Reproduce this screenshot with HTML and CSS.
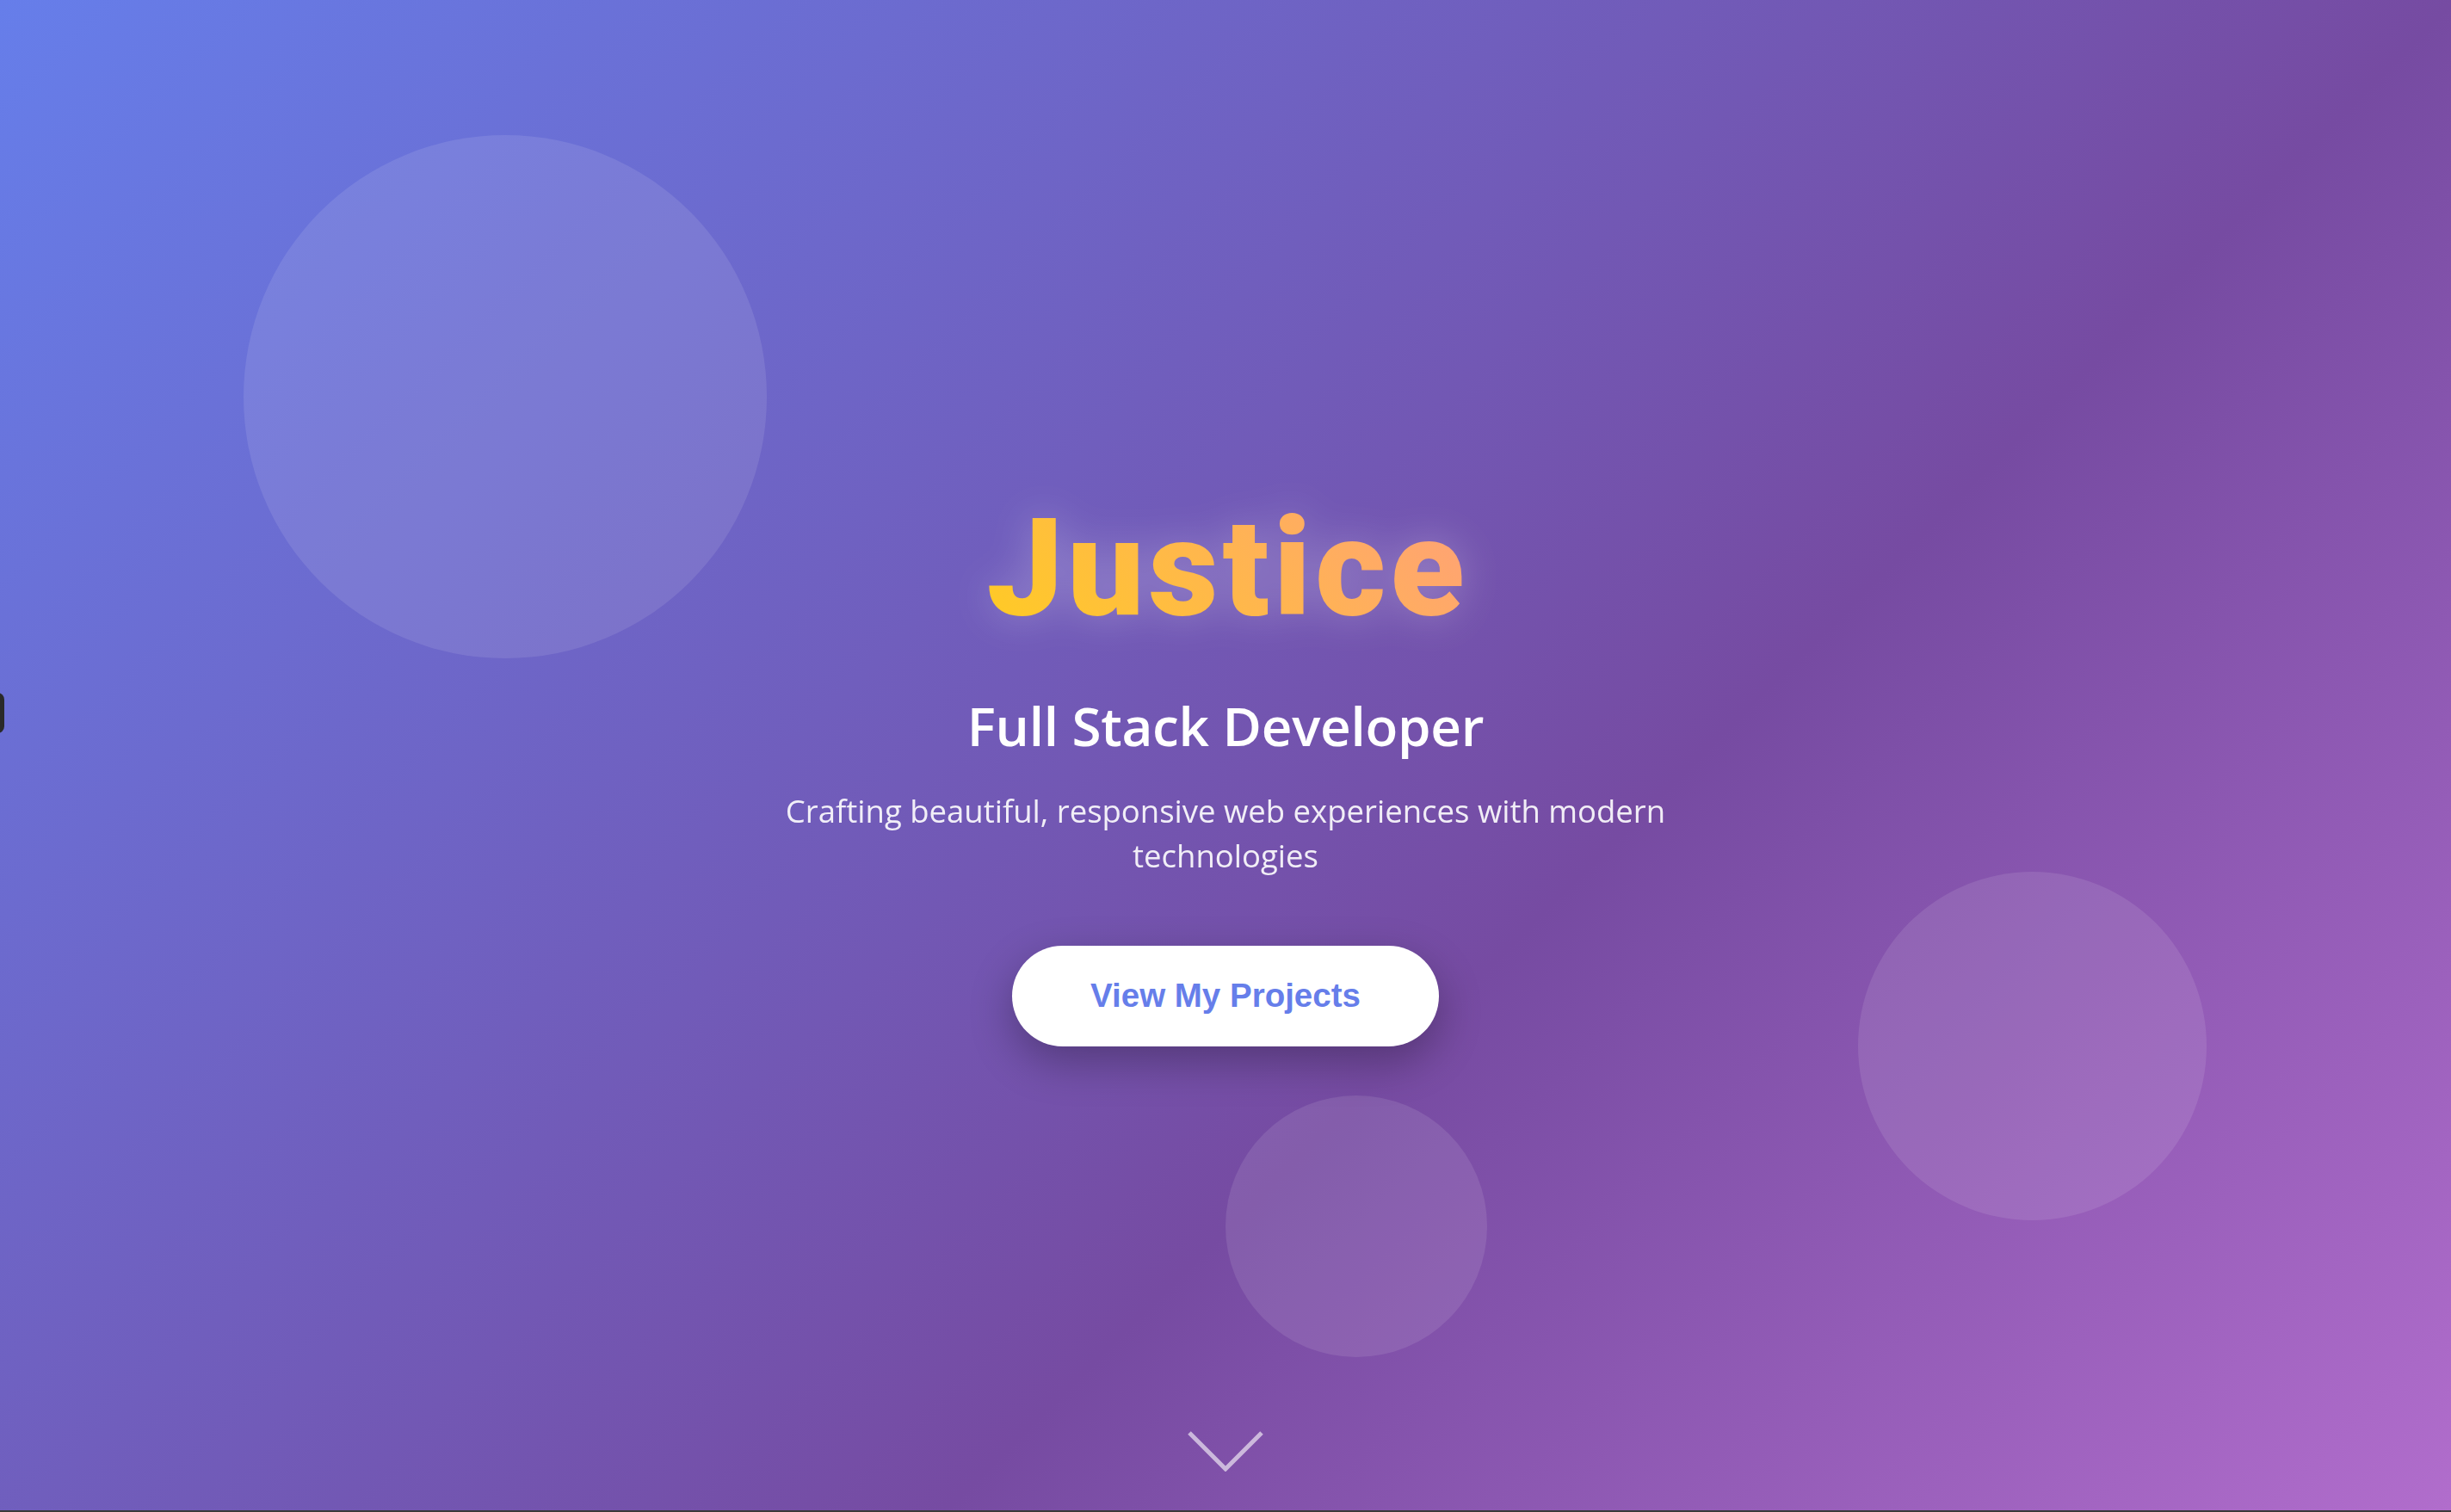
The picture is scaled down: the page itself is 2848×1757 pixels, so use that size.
FILE: index.html
```html
<!DOCTYPE html>
<html lang="en">
<head>
<meta charset="utf-8">
<title>Justice — Full Stack Developer</title>
<link rel="stylesheet" href="styles.css">
</head>
<body>
<section class="hero">
  <span class="shape shape-1"></span>
  <span class="shape shape-2"></span>
  <span class="shape shape-3"></span>
  <span class="side-tab"></span>
  <div class="hero-content">
    <h1 class="hero-title">Justice</h1>
    <h2 class="hero-subtitle">Full Stack Developer</h2>
    <p class="hero-text">Crafting beautiful, responsive web experiences with modern technologies</p>
    <a class="btn" href="#projects">View My Projects</a>
  </div>
  <a class="scroll-indicator" href="#about" aria-label="Scroll down">
    <svg width="90" height="48" viewBox="0 0 90 48"><polyline points="3,3 45,45 87,3" fill="none" stroke="rgba(255,255,255,0.6)" stroke-width="5"/></svg>
  </a>
</section>
</body>
</html>
```
FILE: styles.css
```css
* { box-sizing: border-box; }
html, body { margin: 0; padding: 0; }
body {
  background: #3a3a3a;
  font-family: "Open Sans", "Noto Sans", sans-serif;
  color: #fff;
}
.hero {
  position: relative;
  height: 1755px;
  overflow: hidden;
  background: linear-gradient(135deg, #667eea 0%, #764ba2 62%, #b16dcc 100%);
  display: flex;
  align-items: center;
  justify-content: center;
  padding-top: 35px;
}
.shape {
  position: absolute;
  border-radius: 50%;
  background: rgba(255, 255, 255, 0.1);
}
.shape-1 { width: 608px; height: 608px; left: 283px; top: 157px; }
.shape-2 { width: 405px; height: 405px; left: 2159px; top: 1013px; }
.shape-3 { width: 304px; height: 304px; left: 1424px; top: 1273px; }
.side-tab {
  position: absolute;
  left: -40px;
  top: 805px;
  width: 45px;
  height: 47px;
  border-radius: 8px;
  background: #2a2a2a;
}
.hero-content {
  position: relative;
  z-index: 1;
  display: flex;
  flex-direction: column;
  align-items: center;
  text-align: center;
}
.hero-title {
  margin: 6px 0 0;
  padding-left: 5px;
  font-family: "Roboto", "Open Sans", sans-serif;
  font-weight: 900;
  font-size: 158px;
  letter-spacing: 5px;
  line-height: 1;
  background: linear-gradient(45deg, #ffcc22, #ffa07a);
  -webkit-background-clip: text;
  background-clip: text;
  color: transparent;
  -webkit-text-fill-color: transparent;
  filter: drop-shadow(0 0 24px rgba(255, 255, 255, 0.28));
}
.hero-subtitle {
  margin: 73px 0 0;
  font-weight: 600;
  font-size: 62px;
  letter-spacing: -0.3px;
  line-height: 1;
}
.hero-text {
  margin: 42px 0 0;
  max-width: 1090px;
  font-size: 36.5px;
  line-height: 52px;
  opacity: 0.9;
}
.btn {
  margin-top: 79px;
  display: inline-block;
  padding: 36.5px 91.5px;
  border-radius: 60px;
  background: #fff;
  color: #667eea;
  font-family: "Liberation Sans", Arial, sans-serif;
  font-weight: 700;
  font-size: 38.5px;
  line-height: 44px;
  text-decoration: none;
  box-shadow: 0 18px 50px rgba(0, 0, 0, 0.28);
}
.scroll-indicator {
  position: absolute;
  left: 50%;
  bottom: 45px;
  transform: translateX(-50%);
  display: block;
  line-height: 0;
}
```
